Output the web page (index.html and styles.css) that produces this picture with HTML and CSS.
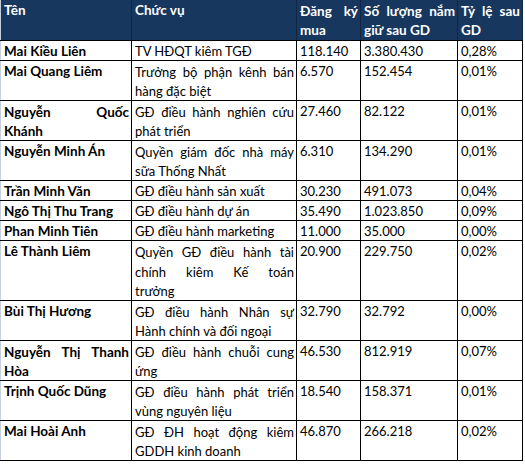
FILE: index.html
```html
<!DOCTYPE html>
<html lang="vi">
<head>
<meta charset="utf-8">
<title>Đăng ký mua cổ phiếu</title>
<link rel="stylesheet" href="styles.css">
</head>
<body>
<table class="grid">
  <colgroup>
    <col class="c-name"><col class="c-role"><col class="c-buy"><col class="c-hold"><col class="c-pct">
  </colgroup>
  <thead>
    <tr class="r2">
      <th>Tên</th>
      <th>Chức vụ</th>
      <th><span class="jl">Đăng ký</span>mua</th>
      <th><span class="jl">Số lượng nắm</span>giữ sau GD</th>
      <th><span class="jl">Tỷ lệ sau</span>GD</th>
    </tr>
  </thead>
  <tbody>
    <tr class="r1">
      <td class="name">Mai Kiều Liên</td>
      <td>TV HĐQT kiêm TGĐ</td>
      <td>118.140</td><td>3.380.430</td><td>0,28%</td>
    </tr>
    <tr class="r2">
      <td class="name">Mai Quang Liêm</td>
      <td><span class="jl">Trưởng bộ phận kênh bán</span>hàng đặc biệt</td>
      <td>6.570</td><td>152.454</td><td>0,01%</td>
    </tr>
    <tr class="r2">
      <td class="name"><span class="jl">Nguyễn Quốc</span>Khánh</td>
      <td><span class="jl">GĐ điều hành nghiên cứu</span>phát triển</td>
      <td>27.460</td><td>82.122</td><td>0,01%</td>
    </tr>
    <tr class="r2">
      <td class="name">Nguyễn Minh Án</td>
      <td><span class="jl">Quyền giám đốc nhà máy</span>sữa Thống Nhất</td>
      <td>6.310</td><td>134.290</td><td>0,01%</td>
    </tr>
    <tr class="r1">
      <td class="name">Trần Minh Văn</td>
      <td>GĐ điều hành sản xuất</td>
      <td>30.230</td><td>491.073</td><td>0,04%</td>
    </tr>
    <tr class="r1">
      <td class="name">Ngô Thị Thu Trang</td>
      <td>GĐ điều hành dự án</td>
      <td>35.490</td><td>1.023.850</td><td>0,09%</td>
    </tr>
    <tr class="r1">
      <td class="name">Phan Minh Tiên</td>
      <td>GĐ điều hành marketing</td>
      <td>11.000</td><td>35.000</td><td>0,00%</td>
    </tr>
    <tr class="r3">
      <td class="name">Lê Thành Liêm</td>
      <td><span class="jl">Quyền GĐ điều hành tài</span><span class="jl">chính kiêm Kế toán</span>trưởng</td>
      <td>20.900</td><td>229.750</td><td>0,02%</td>
    </tr>
    <tr class="r2">
      <td class="name">Bùi Thị Hương</td>
      <td><span class="jl">GĐ điều hành Nhân sự</span>Hành chính và đối ngoại</td>
      <td>32.790</td><td>32.792</td><td>0,00%</td>
    </tr>
    <tr class="r2">
      <td class="name"><span class="jl">Nguyễn Thị Thanh</span>Hòa</td>
      <td><span class="jl">GĐ điều hành chuỗi cung</span>ứng</td>
      <td>46.530</td><td>812.919</td><td>0,07%</td>
    </tr>
    <tr class="r2">
      <td class="name">Trịnh Quốc Dũng</td>
      <td><span class="jl">GĐ điều hành phát triển</span>vùng nguyên liệu</td>
      <td>18.540</td><td>158.371</td><td>0,01%</td>
    </tr>
    <tr class="r2">
      <td class="name">Mai Hoài Anh</td>
      <td><span class="jl">GĐ ĐH hoạt động kiêm</span>GDDH kinh doanh</td>
      <td>46.870</td><td>266.218</td><td>0,02%</td>
    </tr>
  </tbody>
</table>
</body>
</html>
```

FILE: styles.css
```css
html, body {
  margin: 0;
  padding: 0;
  background: #ffffff;
}

body {
  font-family: Lato, "Open Sans", "Liberation Sans", sans-serif;
  font-size: 13px;
  color: #000000;
}

.grid {
  border-collapse: collapse;
  table-layout: fixed;
  width: 522px;
}

.c-name { width: 131px; }
.c-role { width: 165px; }
.c-buy  { width: 64px; }
.c-hold { width: 97px; }
.c-pct  { width: 65px; }

.r1 { height: 20px; }
.r2 { height: 40px; }
.r3 { height: 60px; }

.grid th,
.grid td {
  padding: 1px 2px 0 3px;
  vertical-align: top;
  line-height: 18px;
  text-align: left;
  overflow: hidden;
  white-space: nowrap;
}

.grid th {
  background: #17375e;
  color: #ffffff;
  font-weight: bold;
  font-size: 13.5px;
  border-left: 1px solid #0e2747;
  border-right: 1px solid #0e2747;
  border-bottom: 1px solid #000000;
}

.grid th:first-child {
  border-left: 1px solid #c5cfdc;
}

.grid td {
  border: 1px solid #000000;
}

.grid td.name {
  font-weight: bold;
  font-size: 13.5px;
  border-left: 1px solid #c5cfdc;
}

.jl {
  display: block;
  line-height: 20px;
  text-align: justify;
  text-align-last: justify;
}
```
